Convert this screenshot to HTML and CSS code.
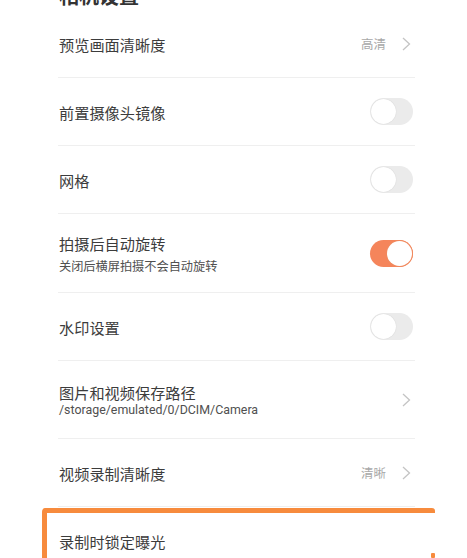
FILE: index.html
```html
<!DOCTYPE html>
<html lang="zh">
<head>
<meta charset="utf-8">
<title>相机设置</title>
<link rel="stylesheet" href="styles.css">
</head>
<body>
<div class="page">
  <div class="title">相机设置</div>
  <div class="list">
    <div class="row">
      <div class="label">预览画面清晰度</div>
      <div class="right"><span class="value">高清</span><svg class="chev" width="9" height="14" viewBox="0 0 9 14"><path d="M1 1 L7.5 7 L1 13" fill="none" stroke="#c4c4c4" stroke-width="1.3"/></svg></div>
    </div>
    <div class="row">
      <div class="label">前置摄像头镜像</div>
      <div class="switch"><span class="knob"></span></div>
    </div>
    <div class="row">
      <div class="label">网格</div>
      <div class="switch"><span class="knob"></span></div>
    </div>
    <div class="row tall">
      <div class="texts">
        <div class="label">拍摄后自动旋转</div>
        <div class="sub">关闭后横屏拍摄不会自动旋转</div>
      </div>
      <div class="switch on"><span class="knob"></span></div>
    </div>
    <div class="row">
      <div class="label">水印设置</div>
      <div class="switch"><span class="knob"></span></div>
    </div>
    <div class="row tall2">
      <div class="texts">
        <div class="label">图片和视频保存路径</div>
        <div class="path">/storage/emulated/0/DCIM/Camera</div>
      </div>
      <div class="right"><svg class="chev" width="9" height="14" viewBox="0 0 9 14"><path d="M1 1 L7.5 7 L1 13" fill="none" stroke="#c4c4c4" stroke-width="1.3"/></svg></div>
    </div>
    <div class="row">
      <div class="label">视频录制清晰度</div>
      <div class="right"><span class="value">清晰</span><svg class="chev" width="9" height="14" viewBox="0 0 9 14"><path d="M1 1 L7.5 7 L1 13" fill="none" stroke="#c4c4c4" stroke-width="1.3"/></svg></div>
    </div>
    <div class="row last">
      <div class="label">录制时锁定曝光</div>
    </div>
  </div>
</div>
<div class="highlight"></div>
<div class="mark"></div>
</body>
</html>
```
FILE: styles.css
```css
html, body {
  margin: 0;
  padding: 0;
  background: #ffffff;
  overflow: hidden;
}
body {
  width: 467px;
  height: 558px;
  position: relative;
  font-family: "Noto Sans CJK SC", "Noto Sans", sans-serif;
  color: #3c3c3c;
}
.page {
  padding: 0 52px 0 58px;
}
.title {
  font-size: 20px;
  font-weight: bold;
  line-height: 28px;
  height: 28px;
  margin-top: -18px;
  padding-left: 1px;
  color: #333;
}
.list {
  display: flex;
  flex-direction: column;
}
.row {
  display: flex;
  align-items: center;
  justify-content: space-between;
  height: 67px;
  border-bottom: 1px solid #efefef;
  padding: 0 2px 0 1px;
  box-sizing: content-box;
}
.row.tall { height: 78px; }
.row.tall2 { height: 77px; }
.row.last { border-bottom: none; }
.label {
  font-size: 15.2px;
  line-height: 20px;
}
.texts {
  display: flex;
  flex-direction: column;
}
.sub {
  font-size: 12.2px;
  line-height: 16px;
  margin-top: 5px;
  color: #505050;
}
.path {
  font-family: Roboto, "Noto Sans", sans-serif;
  font-size: 12.4px;
  line-height: 15px;
  margin-top: 0;
  color: #505050;
}
.right {
  display: flex;
  align-items: center;
  gap: 16px;
  padding-right: 2px;
}
.value {
  font-size: 12.5px;
  color: #a8a8a8;
}
.chev { display: block; }
.switch {
  width: 43px;
  height: 27px;
  border-radius: 14px;
  background: #ebebeb;
  display: flex;
  align-items: center;
  justify-content: flex-start;
  padding: 0 1px;
  box-sizing: border-box;
}
.knob {
  width: 25px;
  height: 25px;
  border-radius: 50%;
  background: #fff;
  box-shadow: 0 0 1px rgba(0,0,0,0.18);
}
.switch.on {
  background: #f5855b;
  justify-content: flex-end;
}
.switch.on .knob {
  box-shadow: 0 0 0 1px #f08a5f;
}
.highlight {
  position: absolute;
  left: 42px;
  top: 508px;
  width: 393px;
  height: 70px;
  border-top: 5px solid #f78b3d;
  border-left: 5px solid #f78b3d;
  border-radius: 4px 3px 0 0;
  box-sizing: border-box;
}
.mark {
  position: absolute;
  left: 431px;
  top: 553px;
  width: 4px;
  height: 5px;
  background: #f78b3d;
  border-radius: 1px;
}
```
